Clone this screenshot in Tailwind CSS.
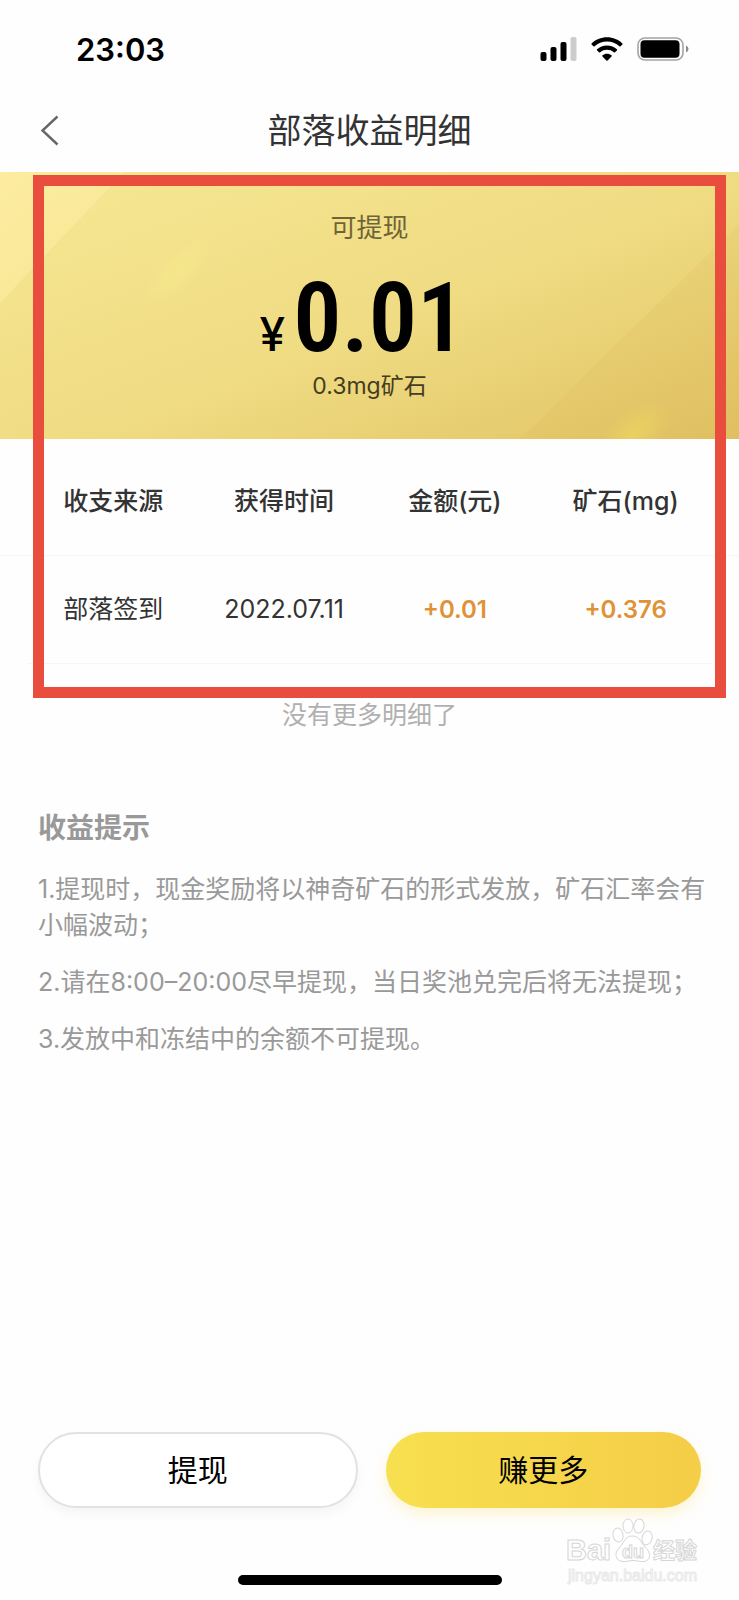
<!DOCTYPE html>
<html lang="zh-CN">
<head>
<meta charset="utf-8">
<meta name="viewport" content="width=device-width, initial-scale=1">
<title>部落收益明细</title>
<script src="https://cdn.jsdelivr.net/npm/@tailwindcss/browser@4"></script>
</head>
<body class="bg-[#fefefe]">
<div class="relative flex min-h-screen flex-col overflow-hidden font-['Inter','Noto_Sans_CJK_SC',sans-serif] text-[25px] text-[#333333]">

  <!-- Status bar -->
  <div class="flex h-[98px] items-center justify-between pr-[50px] pl-[76px] text-black">
    <time class="pt-[2px] text-[31px] leading-8 font-semibold">23:03</time>
    <div class="flex items-center gap-[14px]">
      <svg class="h-6 w-[37px]" viewBox="0 0 37 24" aria-hidden="true">
        <rect x="0.500" y="15" width="6" height="9" rx="2"/>
        <rect x="10.500" y="10" width="6" height="14" rx="2"/>
        <rect x="20.500" y="5" width="6" height="19" rx="2"/>
        <rect x="30.500" y="0" width="6" height="24" rx="2" fill="#cccccc"/>
      </svg>
      <svg class="h-6 w-8" viewBox="0 0 32 24" aria-hidden="true">
        <path d="M16 0.300C22 0.300 27.400 2.600 31.400 6.400C31.800 6.800 31.800 7.200 31.400 7.600L29.600 9.300C29.200 9.700 28.800 9.700 28.400 9.300C25.100 6.200 20.700 4.600 16 4.600C11.300 4.600 6.900 6.200 3.600 9.300C3.200 9.700 2.800 9.700 2.400 9.300L0.600 7.600C0.200 7.200 0.200 6.800 0.600 6.400C4.600 2.600 10 0.300 16 0.300Z"/>
        <path d="M16 8.500C19.900 8.500 23.300 10 25.900 12.300C26.300 12.700 26.300 13.100 25.900 13.500L24 15.200C23.600 15.600 23.200 15.600 22.800 15.200C20.900 13.500 18.600 12.700 16 12.700C13.400 12.700 11.100 13.500 9.200 15.200C8.800 15.600 8.400 15.600 8 15.200L6.100 13.500C5.700 13.100 5.700 12.700 6.100 12.300C8.700 10 12.100 8.500 16 8.500Z"/>
        <path d="M16 16.800C17.800 16.800 19.300 17.400 20.500 18.300C20.900 18.700 20.900 19.100 20.500 19.500L16.600 23.500C16.200 23.900 15.800 23.900 15.400 23.500L11.500 19.500C11.100 19.100 11.100 18.700 11.500 18.300C12.700 17.400 14.200 16.800 16 16.800Z"/>
      </svg>
      <svg class="h-6 w-[52px]" viewBox="0 0 52 24" aria-hidden="true">
        <rect x="1" y="1" width="45" height="22" rx="7" fill="none" stroke="#a3a3a3" stroke-width="1.600"/>
        <rect x="3.500" y="3.300" width="39" height="17.400" rx="4"/>
        <path d="M49 8.500C50.600 9.200 51.500 10.500 51.500 12S50.600 14.800 49 15.500Z" fill="#8c8c8c"/>
      </svg>
    </div>
  </div>

  <!-- Title bar -->
  <header class="grid h-[74px] grid-cols-[64px_1fr_64px] items-center pb-[8px]">
    <button type="button" aria-label="返回" class="flex h-16 items-center pl-[40px]">
      <svg class="h-8 w-5" viewBox="0 0 20 32" fill="none" stroke="#666666" stroke-width="2.400" aria-hidden="true"><path d="M17.500 1.500L2.500 15.500L17.500 29.500"/></svg>
    </button>
    <h1 class="text-center text-[34px] leading-[48px]">部落收益明细</h1>
  </header>

  <main class="flex grow flex-col">
    <div class="relative">
      <!-- Balance -->
      <section class="relative h-[267px] overflow-hidden bg-[#efda80]">
        <svg class="absolute inset-0 size-full" viewBox="0 0 739 267" preserveAspectRatio="none" aria-hidden="true">
          <defs>
            <linearGradient id="base" gradientUnits="userSpaceOnUse" x1="260" y1="-60" x2="440" y2="400"><stop offset="0" stop-color="#f6e692"/><stop offset=".5" stop-color="#efdb82"/><stop offset="1" stop-color="#e0c062"/></linearGradient>
            <linearGradient id="beam" gradientUnits="userSpaceOnUse" x1="0" y1="0" x2="60" y2="60"><stop offset="0" stop-color="#ffeea4" stop-opacity=".8"/><stop offset="1" stop-color="#ffeea4" stop-opacity=".5"/></linearGradient>
            <linearGradient id="shade" gradientUnits="userSpaceOnUse" x1="630" y1="160" x2="739" y2="267"><stop offset="0" stop-color="#d9b550" stop-opacity=".15"/><stop offset="1" stop-color="#d9b550" stop-opacity=".2"/></linearGradient>
            <radialGradient id="glow"><stop offset="0" stop-color="#f0d860" stop-opacity=".9"/><stop offset="1" stop-color="#f0d860" stop-opacity="0"/></radialGradient>
            <radialGradient id="spark"><stop offset="0" stop-color="#f6e88a" stop-opacity=".8"/><stop offset="1" stop-color="#f6e88a" stop-opacity="0"/></radialGradient>
          </defs>
          <rect width="739" height="267" fill="url(#base)"/>
          <path d="M0 0H124L0 131Z" fill="url(#beam)"/>
          <path d="M739 52L520 267H739Z" fill="url(#shade)"/>
          <ellipse cx="178" cy="98" rx="50" ry="20" transform="rotate(-45 178 98)" fill="url(#spark)"/>
          <ellipse cx="634" cy="262" rx="44" ry="24" transform="rotate(-40 634 262)" fill="url(#glow)" opacity=".7"/>
        </svg>
        <div class="relative flex flex-col items-center pt-[36px]">
          <p class="text-[26px] leading-[40px] text-[#6f6437]">可提现</p>
          <p class="flex items-baseline gap-[8px] pt-[22px] pr-[14px] text-black">
            <span class="text-[46px] leading-[40px] font-medium">¥</span>
            <span class="font-['Roboto_Condensed',Roboto,sans-serif] text-[96px] leading-[96px] font-semibold">0.01</span>
          </p>
          <p class="text-[23px] leading-[40px] text-[#453d20]">0.3mg矿石</p>
        </div>
      </section>

      <!-- Records -->
      <table class="w-full table-fixed border-collapse text-center">
        <thead>
          <tr class="h-[116px] border-b border-[#f6f6f6]">
            <td class="w-[28px]"></td>
            <th scope="col" class="pt-[10px] font-medium">收支来源</th>
            <th scope="col" class="pt-[10px] font-medium">获得时间</th>
            <th scope="col" class="pt-[10px] font-medium">金额(元)</th>
            <th scope="col" class="pt-[10px] font-medium">矿石(mg)</th>
            <td class="w-[28px]"></td>
          </tr>
        </thead>
        <tbody>
          <tr class="h-[108px]">
            <td></td>
            <td class="border-b border-[#f6f6f6] pt-[2px]">部落签到</td>
            <td class="border-b border-[#f6f6f6] pt-[2px]">2022.07.11</td>
            <td class="border-b border-[#f6f6f6] pt-[2px] text-[24px] font-semibold text-[#e09238]">+0.01</td>
            <td class="border-b border-[#f6f6f6] pt-[2px] text-[24px] font-semibold text-[#e09238]">+0.376</td>
            <td></td>
          </tr>
        </tbody>
      </table>
      <p class="pt-[33px] text-center leading-[36px] text-[#b0b0b0]">没有更多明细了</p>

      <!-- Highlight frame -->
      <div class="pointer-events-none absolute top-[3px] right-[13px] bottom-[35px] left-[33px] border-11 border-[#e94d3d]"></div>
    </div>

    <section class="pt-[75px] pr-[28px] pl-[38px] leading-[36px] text-[#999999]">
      <h2 class="text-[28px] leading-[40px] font-bold">收益提示</h2>
      <ol class="flex flex-col gap-[21px] pt-[23px]">
        <li>1.提现时，现金奖励将以神奇矿石的形式发放，矿石汇率会有小幅波动；</li>
        <li>2.请在8:00–20:00尽早提现，当日奖池兑完后将无法提现；</li>
        <li>3.发放中和冻结中的余额不可提现。</li>
      </ol>
    </section>

    <div class="mt-auto grid grid-cols-[319fr_315fr] gap-[28px] pr-[38px] pb-[67px] pl-[38px] text-[30px] leading-[40px] text-black">
      <button type="button" class="h-[76px] rounded-full border-2 border-[#e2e2e2] bg-white shadow-[0_6px_12px_rgba(0,0,0,0.04)]">提现</button>
      <button type="button" class="h-[76px] rounded-full bg-linear-to-r from-[#f7e04f] to-[#f5cd47] shadow-[0_6px_14px_rgba(250,215,70,0.25)]">赚更多</button>
    </div>
  </main>

  <div class="flex justify-center pb-[15px]">
    <div class="h-[10px] w-[264px] rounded-full bg-black"></div>
  </div>

  <!-- Watermark -->
  <svg class="pointer-events-none absolute right-[35px] bottom-[11px] h-[74px] w-[140px]" viewBox="0 0 140 74" fill="#ffffff" fill-opacity=".8" stroke="#d6d6d6" stroke-width="1" aria-hidden="true">
    <text x="2" y="45" font-family="Liberation Sans" font-size="29" font-weight="700">Bai</text>
    <ellipse cx="54" cy="20" rx="5" ry="7" transform="rotate(-12 54 20)"/>
    <ellipse cx="64" cy="11" rx="5" ry="7"/>
    <ellipse cx="75" cy="11" rx="5" ry="7" transform="rotate(8 75 11)"/>
    <ellipse cx="83" cy="23" rx="5" ry="7" transform="rotate(15 83 23)"/>
    <path d="M68 21C61 21 60 28 55 33C50 38 51 46 59 46.500C63 46.800 65 45.500 69 45.500S76 47 80 46.500C87 45.500 87 38 82 33C77 28 76 21 68 21Z"/>
    <text x="58" y="43" font-family="Liberation Sans" font-size="18" font-weight="700">du</text>
    <text x="89" y="43" font-family="Noto Sans CJK SC" font-size="22" font-weight="700">经验</text>
    <text x="4" y="66" font-family="Liberation Sans" font-size="16" font-weight="400" stroke="#e9e9e9">jingyan.baidu.com</text>
  </svg>
</div>
</body>
</html>
